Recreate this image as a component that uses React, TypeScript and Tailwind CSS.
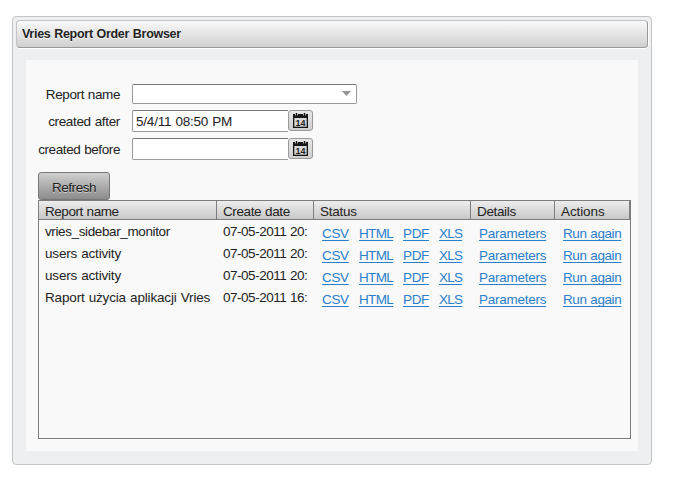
const rows = [
  { name: "vries_sidebar_monitor", date: "07-05-2011 20:", tracking: "tracking-[-0.38px]" },
  { name: "users activity", date: "07-05-2011 20:", tracking: "tracking-[-0.18px]" },
  { name: "users activity", date: "07-05-2011 20:", tracking: "tracking-[-0.18px]" },
  { name: "Raport użycia aplikacji Vries", date: "07-05-2011 16:", tracking: "tracking-[-0.16px]" },
];

const headings = [
  { title: "Report name", tracking: "tracking-[-0.45px]" },
  { title: "Create date", tracking: "tracking-[-0.38px]" },
  { title: "Status", tracking: "tracking-[-0.23px]" },
  { title: "Details", tracking: "tracking-[-0.35px]" },
  { title: "Actions", tracking: "tracking-[-0.1px]" },
];

const columns = "grid grid-cols-[178px_97px_157px_84px_75px]";

function CalendarIcon() {
  return (
    <svg width="15" height="15" viewBox="0 0 15 15" className="block">
      <path d="M0 1h15v14H0z" fill="#161616" />
      <path d="M1.3 5h12.4v8.7H1.3z" fill="#d8d8d8" />
      <path d="M2 0h3v2.6H2zM10 0h3v2.6h-3z" fill="#d8d8d8" />
      <path d="M2.8 0h1.4v3H2.8zM10.8 0h1.4v3h-1.4z" fill="#111" />
      <text x="7.4" y="12.5" textAnchor="middle" fontSize="9" fontWeight="700" letterSpacing="-0.2" fontFamily="Liberation Sans, Arial, sans-serif" fill="#222">14</text>
    </svg>
  );
}

function DateField({ label, value, tracking }: { label: string; value: string; tracking: string }) {
  return (
    <div className="flex h-[22px] items-center">
      <label className={`flex w-[94px] justify-end pt-[3px] pr-3 whitespace-nowrap ${tracking}`}>{label}</label>
      <div className="h-[22px] w-[156px] rounded-l-xs border border-r-0 border-[#9a9a9a] border-t-[#777] bg-white pl-[3px] leading-[21px] tracking-[-0.2px]">{value}</div>
      <button className="flex h-[21px] w-[25px] items-center justify-center self-start rounded-[3px] border border-[#999] bg-linear-to-b from-[#e6e6e6] to-[#cfcfcf]">
        <CalendarIcon />
      </button>
    </div>
  );
}

function Link({ text, className }: { text: string; className: string }) {
  return (
    <a className={`block text-[#2a7fcb] underline decoration-1 underline-offset-2 [text-decoration-skip-ink:none] ${className}`}>{text}</a>
  );
}

export default function App() {
  return (
    <div className="h-[499px] w-[686px] bg-white pt-4 pl-3 font-['Liberation_Sans',Arial,sans-serif] text-[13.5px] text-[#222] [word-spacing:0.5px]">
      <div className="flex h-[449px] w-[640px] flex-col rounded border border-[#c3c5c7] bg-[#edeff1] p-[3px]">
        <div className="h-7 shrink-0 rounded border border-[#c1c3c4] border-r-[#999] border-b-[#999] bg-linear-to-b from-[#f9f9f9] to-[#d0d0d0] pl-[5px] text-[12.5px] leading-[26px] font-bold tracking-[-0.28px] shadow-[0_1px_0_#fff,1px_0_0_#fff] [text-shadow:0_1px_0_#fff]">
          Vries Report Order Browser
        </div>
        <main className="mx-[10px] mt-3 h-[391px] bg-[#f9f9f9] pt-6 pl-3">
          <div className="flex h-5 items-center">
            <label className="flex w-[94px] justify-end pt-[3px] pr-3 tracking-[-0.4px] whitespace-nowrap">Report name</label>
            <div className="flex h-5 w-[225px] items-start justify-end rounded-xs border border-[#999] border-t-[#777] bg-white pt-[6px] pr-[5px]">
              <svg width="9" height="5" viewBox="0 0 9 5"><path d="M0 0h9L4.5 5z" fill="#929292" /></svg>
            </div>
          </div>
          <div className="mt-[6px] flex flex-col gap-[6px]">
            <DateField label="created after" value="5/4/11 08:50 PM" tracking="tracking-[-0.34px]" />
            <DateField label="created before" value="" tracking="tracking-[-0.41px]" />
          </div>
          <button className="mt-3 block h-7 w-[72px] rounded-[3px] border border-[#777] bg-linear-to-b from-[#d0d0d0] to-[#8c8c8c] pt-[5px] tracking-[-0.45px] [text-shadow:0_1px_0_#ccc]">Refresh</button>
          <div className="h-[239px] w-[593px] border border-[#7d7d7d]">
            <div className={`${columns} h-[19px] border-b border-[#7d7d7d] bg-linear-to-b from-[#ededed] to-[#c8c8c8] leading-[21px]`}>
              {headings.map(({ title, tracking }) => (
                <div key={title} className={`h-[18px] border-r border-[#7d7d7d] pl-[6px] ${tracking}`}>{title}</div>
              ))}
            </div>
            {rows.map((row, i) => (
              <div key={i} className={`${columns} h-[22px] leading-[23px] whitespace-nowrap`}>
                <div className={`pl-[6px] ${row.tracking}`}>{row.name}</div>
                <div className="pl-[6px] tracking-[-0.48px]">{row.date}</div>
                <div className="flex pt-[2px] pl-2">
                  <Link text="CSV" className="mr-[10px] w-[27px] tracking-[-0.35px]" />
                  <Link text="HTML" className="mr-[10px] w-[34px] tracking-[-0.65px]" />
                  <Link text="PDF" className="mr-[10px] w-[26px] tracking-[-0.35px]" />
                  <Link text="XLS" className="w-[23px] tracking-[-0.8px]" />
                </div>
                <div className="flex pt-[2px] pl-2"><Link text="Parameters" className="tracking-[-0.26px]" /></div>
                <div className="flex pt-[2px] pl-2"><Link text="Run again" className="tracking-[-0.42px]" /></div>
              </div>
            ))}
          </div>
        </main>
      </div>
    </div>
  );
}
